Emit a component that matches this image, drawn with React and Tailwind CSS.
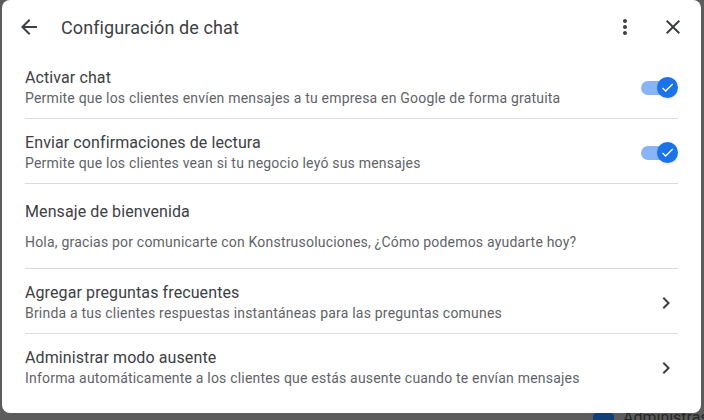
import React from 'react';

const font = { fontFamily: 'Roboto, "Liberation Sans", Arial, sans-serif' };

const ArrowBack = () => (
  <svg viewBox="0 0 24 24" className="w-6 h-6" fill="#3c4043">
    <path d="M20 11H7.83l5.59-5.59L12 4l-8 8 8 8 1.41-1.41L7.83 13H20v-2z" />
  </svg>
);

const MoreVert = () => (
  <svg viewBox="0 0 24 24" className="w-6 h-6" fill="#3c4043">
    <path d="M12 8c1.1 0 2-.9 2-2s-.9-2-2-2-2 .9-2 2 .9 2 2 2zm0 2c-1.1 0-2 .9-2 2s.9 2 2 2 2-.9 2-2-.9-2-2-2zm0 6c-1.1 0-2 .9-2 2s.9 2 2 2 2-.9 2-2-.9-2-2-2z" />
  </svg>
);

const Close = () => (
  <svg viewBox="0 0 24 24" className="w-6 h-6" fill="#3c4043">
    <path d="M19 6.41L17.59 5 12 10.59 6.41 5 5 6.41 10.59 12 5 17.59 6.41 19 12 13.41 17.59 19 19 17.59 13.41 12z" />
  </svg>
);

const Chevron = () => (
  <svg viewBox="0 0 24 24" className="w-6 h-6" fill="#3c4043">
    <path d="M10 6L8.59 7.41 13.17 12l-4.58 4.59L10 18l6-6z" />
  </svg>
);

const Toggle = () => (
  <div className="relative w-[37px] h-[22px] flex items-center">
    <div className="w-[32px] h-[14px] rounded-full bg-[#8ab4f8]" />
    <div className="absolute right-0 top-0 w-[21px] h-[21px] rounded-full bg-[#1a73e8] flex items-center justify-center shadow-sm">
      <svg viewBox="0 0 24 24" className="w-[15px] h-[15px]" fill="white">
        <path d="M9 16.17L4.83 12l-1.42 1.41L9 19 21 7l-1.41-1.41z" />
      </svg>
    </div>
  </div>
);

function Row({ title, desc, right, last }) {
  return (
    <div className={`flex items-center justify-between pt-[13px] pb-[10px] ${last ? '' : 'border-b border-[#dadce0]'}`}>
      <div className="flex flex-col">
        <span className="text-[16px] leading-[21px] tracking-[0.1px] text-[#3c4043]">{title}</span>
        <span className="text-[14px] leading-5 tracking-[0.2px] text-[#5f6368]">{desc}</span>
      </div>
      {right}
    </div>
  );
}

export default function App() {
  return (
    <div className="relative w-[704px] h-[420px] overflow-hidden bg-[#5c5c5c]" style={font}>
      {/* page underneath the overlay */}
      <div className="absolute left-[593px] top-[413px] w-[21px] h-[14px] rounded-sm bg-[#123f78]" />
      <span className="absolute left-[623px] top-[408px] text-[16px] leading-5 text-[#262626]">Administras</span>

      <div className="absolute left-[2px] top-0 w-[699px] h-[413px] bg-white rounded-lg flex flex-col">
        <div className="h-[54px] flex items-center pl-[15px] pr-[16px]">
          <ArrowBack />
          <span className="ml-5 text-[18px] text-[#3c4043] tracking-[0.1px]">Configuración de chat</span>
          <div className="ml-auto flex items-center gap-6">
            <MoreVert />
            <Close />
          </div>
        </div>

        <div className="px-[23px] flex flex-col">
          <Row
            title="Activar chat"
            desc="Permite que los clientes envíen mensajes a tu empresa en Google de forma gratuita"
            right={<Toggle />}
          />
          <Row
            title="Enviar confirmaciones de lectura"
            desc="Permite que los clientes vean si tu negocio leyó sus mensajes"
            right={<Toggle />}
          />
          <div className="flex flex-col pt-4 pb-4 border-b border-[#dadce0]">
            <span className="text-[16px] leading-6 tracking-[0.1px] text-[#3c4043]">Mensaje de bienvenida</span>
            <span className="mt-2 text-[14px] leading-5 tracking-[0.2px] text-[#5f6368]">
              Hola, gracias por comunicarte con Konstrusoluciones, ¿Cómo podemos ayudarte hoy?
            </span>
          </div>
          <Row
            title="Agregar preguntas frecuentes"
            desc="Brinda a tus clientes respuestas instantáneas para las preguntas comunes"
            right={<Chevron />}
          />
          <Row
            title="Administrar modo ausente"
            desc="Informa automáticamente a los clientes que estás ausente cuando te envían mensajes"
            right={<Chevron />}
            last
          />
        </div>
      </div>
    </div>
  );
}
